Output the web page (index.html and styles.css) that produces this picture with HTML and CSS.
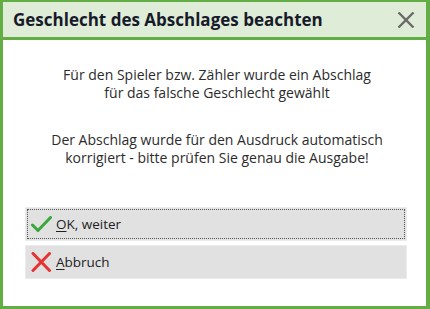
FILE: index.html
```html
<!DOCTYPE html>
<html lang="de">
<head>
<meta charset="utf-8">
<title>Geschlecht des Abschlages beachten</title>
<link rel="stylesheet" href="styles.css">
</head>
<body>
<div class="dialog">
  <div class="titlebar">
    <span class="title">Geschlecht des Abschlages beachten</span>
    <svg class="close" width="18" height="16" viewBox="0 0 18 16">
      <path d="M1.5 0.5 L16.5 15.5 M16.5 0.5 L1.5 15.5" stroke="#6a6a6a" stroke-width="2.4" fill="none"/>
    </svg>
  </div>
  <div class="content">
    <div class="msg">
      <span class="line">Für den Spieler bzw. Zähler wurde ein Abschlag</span>
      <span class="line">für das falsche Geschlecht gewählt</span>
    </div>
    <div class="msg second">
      <span class="line">Der Abschlag wurde für den Ausdruck automatisch</span>
      <span class="line">korrigiert - bitte prüfen Sie genau die Ausgabe!</span>
    </div>
    <div class="buttons">
      <div class="btn focused">
        <svg class="icon" width="21" height="17" viewBox="0 0 21 17">
          <path d="M1.5 9 L7 14.5 L19.5 1.5" stroke="#3aa83a" stroke-width="3" fill="none" stroke-linecap="round" stroke-linejoin="round"/>
        </svg>
        <span class="label"><u>O</u>K, weiter</span>
      </div>
      <div class="btn">
        <svg class="icon" width="21" height="20" viewBox="0 0 21 20">
          <path d="M2 1.5 L18.5 18.5 M18.5 1.5 L2 18.5" stroke="#e53333" stroke-width="3" fill="none" stroke-linecap="round"/>
        </svg>
        <span class="label"><u>A</u>bbruch</span>
      </div>
    </div>
  </div>
</div>
</body>
</html>
```
FILE: styles.css
```css
html, body {
  margin: 0;
  padding: 0;
  background: #ffffff;
}
.dialog {
  width: 430px;
  height: 309px;
  box-sizing: border-box;
  border: 3px solid #62ae45;
  border-top-width: 2px;
  border-right-width: 4px;
  display: flex;
  flex-direction: column;
  font-family: "Open Sans", "Noto Sans", sans-serif;
}
.titlebar {
  height: 35px;
  flex: none;
  background: #dfedd8;
  border-bottom: 3px solid #62ae45;
  display: flex;
  align-items: center;
  justify-content: space-between;
  padding: 0 11px 0 10px;
}
.title {
  font-weight: 700;
  font-size: 17px;
  color: #171a2a;
}
.close {
  display: block;
  margin-top: 1px;
}
.content {
  flex: 1;
  background: #ffffff;
  padding: 26px 19px 0 22px;
  display: flex;
  flex-direction: column;
}
.msg {
  display: flex;
  flex-direction: column;
  align-items: center;
  font-size: 14px;
  line-height: 18px;
  color: #2c2c2c;
  padding-left: 2px;
}
.line {
  display: block;
  height: 18px;
  white-space: nowrap;
}
.msg.second {
  margin-top: 29px;
}
.buttons {
  margin-top: 40px;
  display: flex;
  flex-direction: column;
  gap: 4px;
}
.btn {
  height: 34px;
  box-sizing: border-box;
  background: #e1e1e1;
  border: 1px solid #ebebeb;
  display: flex;
  align-items: center;
  padding-left: 5px;
  gap: 4px;
}
.btn.focused {
  outline: 1px dotted #555555;
  outline-offset: -3px;
}
.icon {
  display: block;
}
.label {
  font-size: 13.5px;
  color: #222222;
}
.label u {
  text-underline-offset: 2px;
}
```
